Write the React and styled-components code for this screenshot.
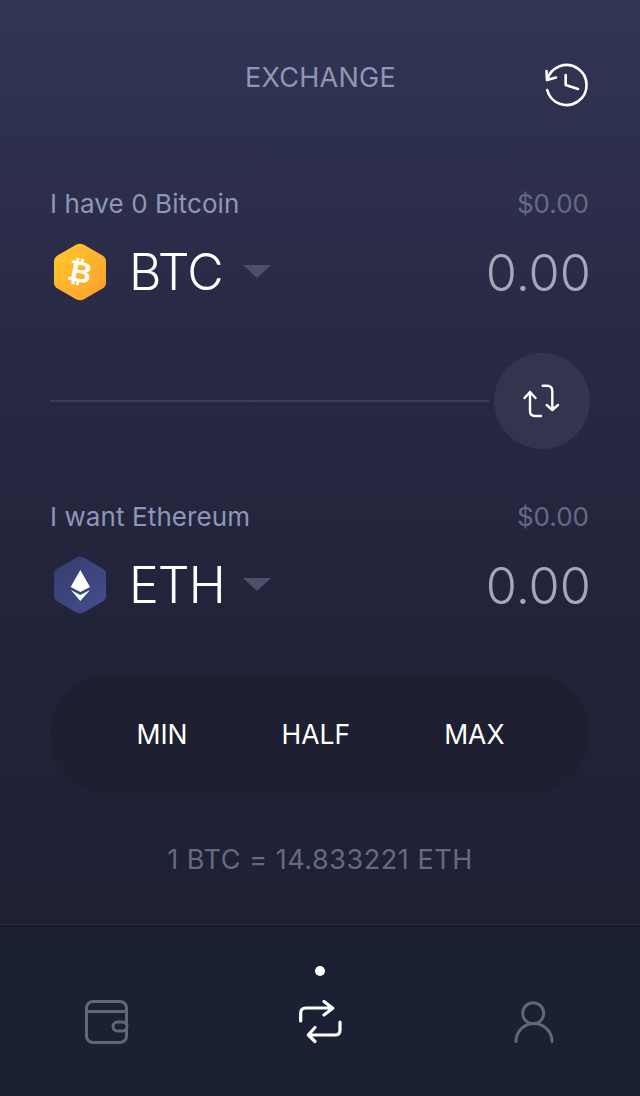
import React from "react";
import styled, { createGlobalStyle } from "styled-components";

const Global = createGlobalStyle`
  html, body { margin: 0; padding: 0; background: #1a2133; }
  * { box-sizing: border-box; }
`;

const Page = styled.div`
  width: 640px; height: 1096px; display: flex; flex-direction: column;
  font-family: Inter, "Noto Sans", sans-serif; overflow: hidden;
`;
const Main = styled.main`
  flex: 1; display: flex; flex-direction: column; padding: 0 51px;
  background: linear-gradient(180deg, #323554 0%, #292b47 30%, #212339 70%, #1e2034 100%);
`;
const Header = styled.header`
  height: 185px; display: flex; align-items: flex-start; justify-content: center; position: relative; padding-top: 61px;
`;
const Title = styled.h1`
  margin: 0 0 0 1px; font-size: 27px; line-height: 34px; font-weight: 400; color: #8f96b8; letter-spacing: 0.25px;
`;
const HistoryButton = styled.div`
  position: absolute; right: 0; top: 63px; width: 44px; height: 44px;
`;
const Section = styled.section`
  display: flex; flex-direction: column;
`;
const TopRow = styled.div`
  display: flex; justify-content: space-between; align-items: center; height: 36px;
`;
const Label = styled.span`
  font-size: 26px; color: #8f96b8; letter-spacing: 0.1px; margin-left: -1px;
`;
const Usd = styled.span`
  font-size: 26px; color: #656a85;
`;
const AssetRow = styled.div`
  display: flex; align-items: center; justify-content: space-between; height: 70px; margin-top: 16px;
`;
const Asset = styled.div`
  display: flex; align-items: center; margin-left: 3px;
`;
const Ticker = styled.span`
  font-size: 50px; font-weight: 300; color: #fff; margin-left: 23px; width: 114px; letter-spacing: -0.9px;
`;
const Caret = styled.span`
  width: 0; height: 0; border-left: 14px solid transparent; border-right: 14px solid transparent;
  border-top: 13px solid #4d5068; margin-top: -1px;
`;
const Amount = styled.span`
  font-size: 50.5px; font-weight: 300; color: #a5a7b6; margin-right: -2px;
`;
const DividerRow = styled.div`
  display: flex; align-items: center; height: 96px; margin: 46px -1px 49px 0;
`;
const Line = styled.div`
  flex: 1; height: 2px; background: #3a3d58; margin-right: 5px; margin-left: -1px;
`;
const SwapCircle = styled.div`
  width: 96px; height: 96px; border-radius: 50%; background: #33354e; display: flex; align-items: center; justify-content: center;
`;
const Limits = styled.div`
  height: 118px; border-radius: 59px; background: #1e1f30; margin: 55px 0 0 -1px; padding-left: 2px; display: flex; gap: 94px; align-items: center; justify-content: center;
`;
const LimitButton = styled.span`
  font-size: 26.5px; color: #fff; font-weight: 400;
`;
const Rate = styled.div`
  text-align: center; font-size: 27px; color: #656a7f; margin-top: 50px; letter-spacing: 0.55px;
`;
const Nav = styled.nav`
  height: 170px; background: #1a2133; border-top: 1px solid #14151f; display: grid; grid-template-columns: repeat(3, 1fr);
`;
const NavItem = styled.div`
  position: relative; display: flex; justify-content: center; padding-top: 73px;
`;
const Dot = styled.span`
  position: absolute; top: 39px; left: 50%; margin-left: -5px; width: 10px; height: 10px; border-radius: 50%; background: #fff;
`;

const HEX = "M22 1.8 Q26 -0.5 30 1.8 L48.5 12.5 Q52 14.5 52 18.5 V39.5 Q52 43.5 48.5 45.5 L30 56.2 Q26 58.5 22 56.2 L3.5 45.5 Q0 43.5 0 39.5 V18.5 Q0 14.5 3.5 12.5 Z";

const BtcIcon = () => (
  <svg width="52" height="58" viewBox="0 0 52 58">
    <defs>
      <linearGradient id="btcg" x1="0" y1="0" x2="1" y2="1">
        <stop offset="0" stopColor="#ffcb2b" /><stop offset="1" stopColor="#fb9d2d" />
      </linearGradient>
    </defs>
    <path d={HEX} fill="url(#btcg)" />
    <text x="26" y="39" textAnchor="middle" transform="rotate(12 26 29)" fontFamily="Liberation Sans" fontWeight="700" fontSize="29" fill="#fff">₿</text>
  </svg>
);
const EthIcon = () => (
  <svg width="52" height="58" viewBox="0 0 52 58">
    <defs>
      <linearGradient id="ethg" x1="0" y1="0" x2="1" y2="1">
        <stop offset="0" stopColor="#343b6c" /><stop offset="1" stopColor="#454f8f" />
      </linearGradient>
    </defs>
    <path d={HEX} fill="url(#ethg)" />
    <path d="M26.3 14 L36 31 L26.3 36 L16.7 31 Z" fill="#fff" />
    <path d="M17 34 L26.3 39 L36 34 L26.3 45 Z" fill="#fff" />
  </svg>
);
const HistoryIcon = () => (
  <svg width="44" height="44" viewBox="0 0 44 44" fill="none" stroke="#fff" strokeWidth="2.6" strokeLinecap="round" strokeLinejoin="round">
    <path d="M2.2 17 A20 20 0 1 1 2.2 27" />
    <path d="M1.5 8 L2 17 L11 14.5" />
    <path d="M20.7 12 V22 L33 26" />
  </svg>
);
const SwapIcon = () => (
  <svg width="40" height="34" viewBox="0 0 40 34" fill="none" stroke="#fff" strokeWidth="2.4" strokeLinecap="round" strokeLinejoin="round">
    <path d="M2.5 14 L8 8 L13.5 14 M8 8 V27 Q8 32 13 32 H19" />
    <path d="M20.7 1.7 H25 Q30.3 1.7 30.3 7 V26 M24.7 21 L30.3 26 L36 21" />
  </svg>
);
const WalletIcon = () => (
  <svg width="44" height="44" viewBox="0 0 44 44" fill="none" stroke="#626777" strokeWidth="3" strokeLinecap="round" strokeLinejoin="round">
    <rect x="1.5" y="1.5" width="40" height="41" rx="6.5" />
    <path d="M1.5 11.5 H41.5" />
    <rect x="28" y="22" width="14" height="9" rx="4.5" fill="#1a2133" />
  </svg>
);
const ExchangeIcon = () => (
  <svg width="44" height="44" viewBox="0 0 44 44" fill="none" stroke="#fff" strokeWidth="3.2" strokeLinecap="round" strokeLinejoin="round">
    <path d="M2.7 21 V13 Q2.7 8 8 8 H34.7 M26 1.5 L34.7 8.3 L26 15" />
    <path d="M42 22 V30 Q42 35 37 35 H10.3 M17 27.5 L10.3 35 L17 41.5" />
  </svg>
);
const UserIcon = () => (
  <svg width="44" height="44" viewBox="0 0 44 44" fill="none" stroke="#626777" strokeWidth="3" strokeLinecap="round">
    <circle cx="22.2" cy="13.3" r="10.5" />
    <path d="M5 41.5 A18 18 0 0 1 41 41.5" />
  </svg>
);

const Row = ({ label, usd, icon, ticker, amount }) => (
  <Section>
    <TopRow><Label>{label}</Label><Usd>{usd}</Usd></TopRow>
    <AssetRow>
      <Asset>{icon}<Ticker>{ticker}</Ticker><Caret /></Asset>
      <Amount>{amount}</Amount>
    </AssetRow>
  </Section>
);

export default function App() {
  return (
    <Page>
      <Global />
      <Main>
        <Header>
          <Title>EXCHANGE</Title>
          <HistoryButton><HistoryIcon /></HistoryButton>
        </Header>
        <Row label="I have 0 Bitcoin" usd="$0.00" icon={<BtcIcon />} ticker="BTC" amount="0.00" />
        <DividerRow><Line /><SwapCircle><SwapIcon /></SwapCircle></DividerRow>
        <Row label="I want Ethereum" usd="$0.00" icon={<EthIcon />} ticker="ETH" amount="0.00" />
        <Limits>
          <LimitButton>MIN</LimitButton><LimitButton>HALF</LimitButton><LimitButton>MAX</LimitButton>
        </Limits>
        <Rate>1 BTC = 14.833221 ETH</Rate>
      </Main>
      <Nav>
        <NavItem><WalletIcon /></NavItem>
        <NavItem><Dot /><ExchangeIcon /></NavItem>
        <NavItem><UserIcon /></NavItem>
      </Nav>
    </Page>
  );
}
